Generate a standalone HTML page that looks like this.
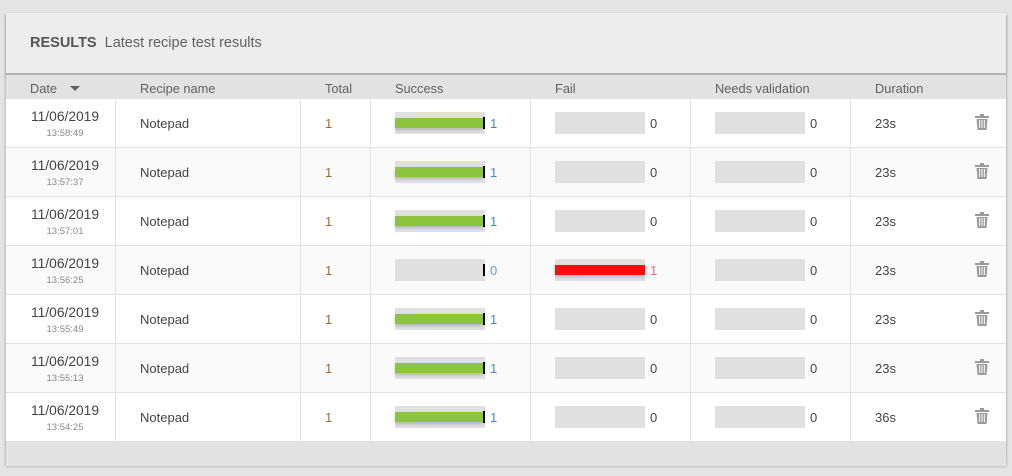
<!DOCTYPE html>
<html><head><style>
body{margin:0;width:1012px;height:476px;background:#e4e4e4;font-family:"Liberation Sans",sans-serif;position:relative;overflow:hidden}
.card{position:absolute;left:6px;top:13px;width:1000px;height:451px;background:#ededed;box-shadow:0 2px 3px rgba(0,0,0,.35)}
.hd{height:60px;border-bottom:2px solid #b5b5b5;box-shadow:0 1px 2px rgba(0,0,0,.2);position:relative}
.hd span{position:absolute;left:24px;top:22px;font-size:14.5px;color:#616161}
.hd b{color:#555;margin-right:4px}
.th{height:24px;background:#e2e2e2;position:relative;font-size:12.8px;color:#616161}
.th div,.r div{position:absolute}
.r{height:48px;border-bottom:1px solid #e2e2e2;background:#fff;position:relative;font-size:13px;color:#444}
.r.a{background:#fafafa}
.ft{height:24px;background:#e2e2e2}
.v{top:0;bottom:0;width:1px;background:#e2e2e2}
.bar{width:90px;height:22px;background:#e0e0e0;top:13px}
.bar i{position:absolute;left:0;top:6px;height:10px;width:88px;box-shadow:0 2px 3px rgba(0,0,0,.2)}
.bar em{position:absolute;left:88px;top:5px;width:2px;height:12px;background:#000}
.n{top:17px}
</style></head><body>
<div class="card">
<div class="hd"><span><b>RESULTS</b> Latest recipe test results</span></div>
<div class="th">
<div style="left:24px;top:6px">Date</div>
<div style="left:64px;top:11px;width:0;height:0;border-left:5px solid transparent;border-right:5px solid transparent;border-top:5px solid #616161"></div>
<div style="left:134px;top:6px">Recipe name</div>
<div style="left:319px;top:6px">Total</div>
<div style="left:389px;top:6px">Success</div>
<div style="left:549px;top:6px">Fail</div>
<div style="left:709px;top:6px">Needs validation</div>
<div style="left:869px;top:6px">Duration</div>
</div>
<div id="rows"></div>
<script>
var d=[["13:58:49",1,0,"23s"],["13:57:37",1,0,"23s"],["13:57:01",1,0,"23s"],["13:56:25",0,1,"23s"],["13:55:49",1,0,"23s"],["13:55:13",1,0,"23s"],["13:54:25",1,0,"36s"]];
var h="";
d.forEach(function(r,i){
h+='<div class="r'+(i%2?' a':'')+'">'+
'<div class="v" style="left:109px"></div><div class="v" style="left:294px"></div><div class="v" style="left:364px"></div><div class="v" style="left:524px"></div><div class="v" style="left:684px"></div><div class="v" style="left:844px"></div>'+
'<div style="left:0;width:118px;text-align:center;top:10px;font-size:13.8px;color:#444">11/06/2019</div>'+
'<div style="left:0;width:118px;text-align:center;top:29px;font-size:9.5px;color:#888">'+r[0]+'</div>'+
'<div class="n" style="left:134px">Notepad</div>'+
'<div class="n" style="left:319px;color:#9a6a36">1</div>'+
'<div class="bar" style="left:389px">'+(r[1]?'<i style="background:#8bc43f"></i>':'')+'<em></em></div>'+
'<div class="n" style="left:484px;color:'+(r[1]?'#3a8fc8':'#6a9fd0')+'">'+r[1]+'</div>'+
'<div class="bar" style="left:549px">'+(r[2]?'<i style="background:#fc0d0d;width:90px"></i>':'')+'</div>'+
'<div class="n" style="left:644px;color:'+(r[2]?'#f06292':'#444')+'">'+r[2]+'</div>'+
'<div class="bar" style="left:709px"></div>'+
'<div class="n" style="left:804px">0</div>'+
'<div class="n" style="left:869px">'+r[3]+'</div>'+
'<div style="left:969px;top:15px"><svg width="14" height="16" viewBox="0 0 14 16"><rect x="5" y="0" width="4" height="2" fill="#9a9a9a"/><rect x="0" y="2" width="14" height="2" fill="#9a9a9a"/><path d="M1.5 5h11l-1 11h-9z" fill="#9a9a9a"/><rect x="4" y="6" width="1.2" height="8" fill="#eee"/><rect x="6.4" y="6" width="1.2" height="8" fill="#eee"/><rect x="8.8" y="6" width="1.2" height="8" fill="#eee"/></svg></div>'+
'</div>';});
document.getElementById("rows").innerHTML=h;
</script>
<div class="ft"></div>
</div>
</body></html>
